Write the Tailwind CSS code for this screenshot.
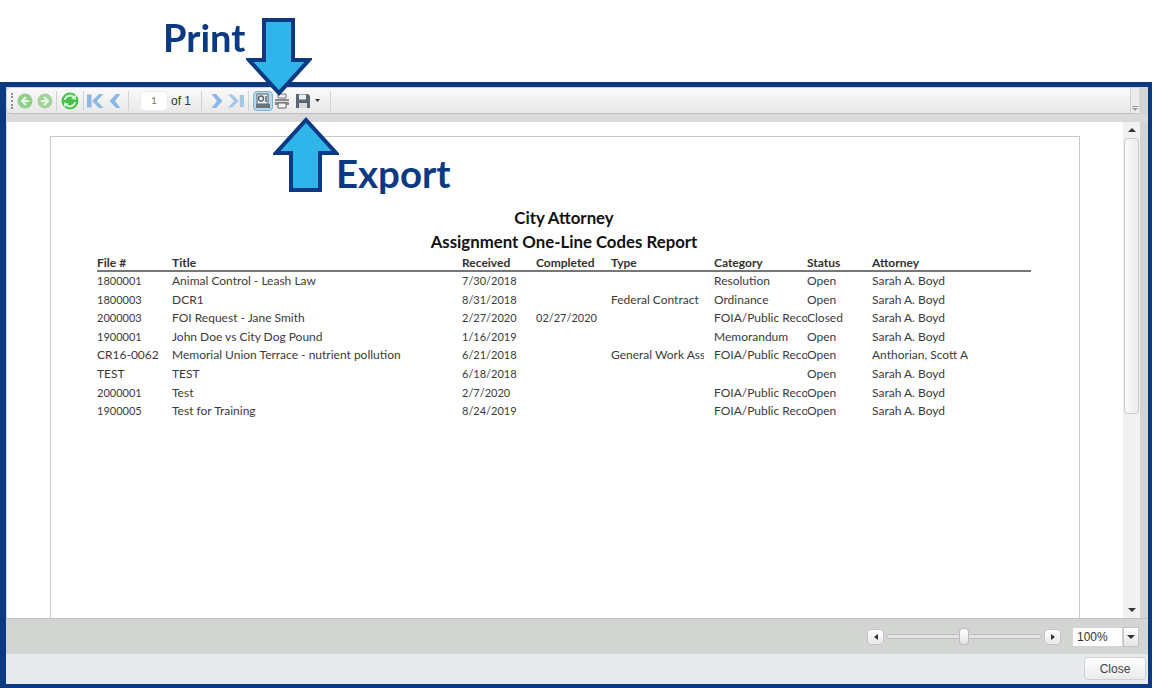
<!DOCTYPE html>
<html lang="en">
<head>
    <meta charset="UTF-8">
    <title>City Attorney Report</title>
    <script src="https://cdn.jsdelivr.net/npm/@tailwindcss/browser@4"></script>
</head>
<body class="bg-white font-['Lato','Liberation_Sans',sans-serif] overflow-hidden">
<div class="relative w-[1153px] h-[688px] overflow-hidden blur-[0.35px]">

    <!-- Callout space -->
    <div class="h-[82px]"></div>

    <!-- Report window -->
    <div class="h-[606px] w-[1152px] border-l-[6px] border-r-[4px] border-t-[5px] border-b-[4px] border-[#0b3a82] bg-[#d3d5d3] flex flex-col">

        <!-- Toolbar -->
        <div class="h-[26px] mt-[1px] ml-[1px] mr-[9px] bg-gradient-to-b from-[#fafafa] to-[#e8e8e8] border-b border-[#bdbdbd] rounded-sm flex items-center shrink-0">
            <div class="w-[3px] h-[16px] ml-[4px] mr-[2px] border-l-2 border-dotted border-[#8c8c8c]"></div>
            <!-- back / forward -->
            <svg class="w-[16px] h-[16px] ml-[1px]" viewBox="0 0 16 16"><circle cx="8" cy="8" r="7.5" fill="#8fd08c"/><path d="M9 4 5 8l4 4M5 8h7" fill="none" stroke="#e9f7e6" stroke-width="2"/></svg>
            <svg class="w-[16px] h-[16px] ml-[4px]" viewBox="0 0 16 16"><circle cx="8" cy="8" r="7.5" fill="#a4d39c"/><path d="m7 4 4 4-4 4m4-4H4" fill="none" stroke="#e9f7e6" stroke-width="2"/></svg>
            <div class="w-px h-[20px] bg-[#d2d2d2] ml-[3px] mr-[4px]"></div>
            <!-- refresh -->
            <svg class="w-[18px] h-[18px]" viewBox="0 0 16 16"><circle cx="8" cy="8" r="7.5" fill="#45c24a"/><path d="M3.500 7A4.600 4.600 0 0 1 12 5.500M12.500 9A4.600 4.600 0 0 1 4 10.500" fill="none" stroke="#d8f5d5" stroke-width="1.800"/><path d="m13.500 2.500-.5 4.500-4-1.500zM2.500 13.500l.5-4.500 4 1.500z" fill="#d8f5d5"/></svg>
            <div class="w-px h-[20px] bg-[#d2d2d2] ml-[4px] mr-[3px]"></div>
            <!-- first / prev -->
            <svg class="w-[17px] h-[16px]" viewBox="0 0 17 16"><path d="M0 1.500h4.500v13H0zM12 1h4.500L10 8l6.500 7H12L5 8z" fill="#8db8e2"/></svg>
            <svg class="w-[12px] h-[16px] ml-[5px]" viewBox="0 0 12 16"><path d="M7 1h4.500L6 8l5.500 7H7L.5 8z" fill="#8db8e2"/></svg>
            <div class="w-px h-[20px] bg-[#d2d2d2] ml-[7px] mr-[11px]"></div>
            <!-- page -->
            <div class="w-[28px] h-[20px] bg-white border border-[#ebebeb] text-[10px] text-[#777] flex items-center justify-center rounded-sm">1</div>
            <span class="w-[21px] text-[12px] whitespace-nowrap text-[#333] ml-[3px] font-['Liberation_Sans',sans-serif]">of 1</span>
            <div class="w-px h-[20px] bg-[#d2d2d2] ml-[9px] mr-[9px]"></div>
            <!-- next / last -->
            <svg class="w-[12px] h-[16px]" viewBox="0 0 12 16"><path d="M5 1H.5L6 8 .5 15H5l6.500-7z" fill="#8db8e2"/></svg>
            <svg class="w-[16px] h-[16px] ml-[5px]" viewBox="0 0 17 16"><path d="M12.500 1.500H17v13h-4.500zM4.500 1H0l6.500 7L0 15h4.500L11.500 8z" fill="#a7c6e6"/></svg>
            <div class="w-px h-[20px] bg-[#d2d2d2] ml-[4px] mr-[4px]"></div>
            <!-- print layout, toggled -->
            <div class="w-[20px] h-[20px] bg-[#b9d8ec] border border-[#7fb2d3] rounded-sm flex items-center justify-center">
                <svg class="w-[16px] h-[16px]" viewBox="0 0 16 16"><rect x="2" y="1" width="11" height="10" fill="#e7eef3" stroke="#59636b"/><circle cx="6" cy="5.500" r="2.500" fill="none" stroke="#59636b" stroke-width="1.300"/><path d="M11 3v6" stroke="#59636b" stroke-width="1.500"/><path d="M1 11h14v4H1z" fill="#6b747b"/></svg>
            </div>
            <!-- print -->
            <svg class="w-[16px] h-[16px] ml-[1px]" viewBox="0 0 16 16"><path d="M4 1h8v4H4z" fill="#f2f2f2" stroke="#777"/><path d="M1 6h14v6H1z" fill="#8a8a8a"/><path d="M1 8.500h14" stroke="#ddd"/><path d="M4 10h8v5H4z" fill="#f4f4f4" stroke="#666"/></svg>
            <!-- export -->
            <svg class="w-[16px] h-[16px] ml-[5px]" viewBox="0 0 16 16"><path d="M1 1h12l2 2v12H1z" fill="#5c6670"/><path d="M4 1.500h7v5H4z" fill="#e8edf1"/><path d="M4 10h8v5H4z" fill="#d9d9d9"/></svg>
            <svg class="w-[5px] h-[3px] ml-[4px]" viewBox="0 0 5 3"><path d="M0 0h5L2.500 3z" fill="#333"/></svg>
            <div class="w-px h-[20px] bg-[#d2d2d2] ml-[10px]"></div>
            <!-- overflow grip -->
            <div class="ml-auto w-[9px] h-full border-l border-[#d0d0d0] bg-[#ececec] flex flex-col justify-end items-center pb-[2px] gap-[1px]">
                <div class="w-[6px] h-px bg-[#9a9a9a]"></div>
                <div class="w-0 h-0 border-x-[3px] border-t-[3px] border-x-transparent border-t-[#9a9a9a]"></div>
            </div>
        </div>
        <div class="h-[8px] bg-[#d8d9d8] shrink-0"></div>

        <!-- Report viewer -->
        <div class="flex h-[496px] ml-[1px] shrink-0">
            <div class="flex-1 overflow-hidden pt-[14px] pl-[43px] bg-white">
                <div class="w-[1030px] h-[600px] border border-[#c8c8c8] pl-[46px]">
                    <div class="w-[934px] pt-[70px] text-[#3b3b3b]">
                        <h1 class="text-center text-[16.8px] leading-[22px] font-bold text-[#111]">City Attorney</h1>
                        <h2 class="text-center text-[16.8px] leading-[23px] mt-[1px] font-bold text-[#111]">Assignment One-Line Codes Report</h2>
                        <div class="grid grid-cols-[75px_290px_74px_75px_103px_93px_65px_159px] text-[12px] leading-[18.6px] whitespace-nowrap mt-[2px]">
                            <div class="col-span-8 grid grid-cols-subgrid font-bold text-[#333] border-b-2 border-[#777] h-[17px] leading-[16px]">
                                <div>File #</div><div>Title</div><div>Received</div><div>Completed</div><div>Type</div><div>Category</div><div>Status</div><div>Attorney</div>
                            </div>
                            <div class="col-span-8 grid grid-cols-subgrid">
                                <div class="text-[11px]">1800001</div><div>Animal Control - Leash Law</div><div class="text-[11px]">7/30/2018</div><div></div><div></div><div>Resolution</div><div>Open</div><div>Sarah A. Boyd</div>
                            </div>
                            <div class="col-span-8 grid grid-cols-subgrid">
                                <div class="text-[11px]">1800003</div><div>DCR1</div><div class="text-[11px]">8/31/2018</div><div></div><div>Federal Contract</div><div>Ordinance</div><div>Open</div><div>Sarah A. Boyd</div>
                            </div>
                            <div class="col-span-8 grid grid-cols-subgrid">
                                <div class="text-[11px]">2000003</div><div>FOI Request - Jane Smith</div><div class="text-[11px]">2/27/2020</div><div class="text-[11px]">02/27/2020</div><div></div><div class="overflow-hidden">FOIA/Public Records</div><div>Closed</div><div>Sarah A. Boyd</div>
                            </div>
                            <div class="col-span-8 grid grid-cols-subgrid">
                                <div class="text-[11px]">1900001</div><div>John Doe vs City Dog Pound</div><div class="text-[11px]">1/16/2019</div><div></div><div></div><div>Memorandum</div><div>Open</div><div>Sarah A. Boyd</div>
                            </div>
                            <div class="col-span-8 grid grid-cols-subgrid">
                                <div>CR16-0062</div><div>Memorial Union Terrace - nutrient pollution</div><div class="text-[11px]">6/21/2018</div><div></div><div class="w-[93px] overflow-hidden">General Work Assignment</div><div class="overflow-hidden">FOIA/Public Records</div><div>Open</div><div>Anthorian, Scott A</div>
                            </div>
                            <div class="col-span-8 grid grid-cols-subgrid">
                                <div>TEST</div><div>TEST</div><div class="text-[11px]">6/18/2018</div><div></div><div></div><div></div><div>Open</div><div>Sarah A. Boyd</div>
                            </div>
                            <div class="col-span-8 grid grid-cols-subgrid">
                                <div class="text-[11px]">2000001</div><div>Test</div><div class="text-[11px]">2/7/2020</div><div></div><div></div><div class="overflow-hidden">FOIA/Public Records</div><div>Open</div><div>Sarah A. Boyd</div>
                            </div>
                            <div class="col-span-8 grid grid-cols-subgrid">
                                <div class="text-[11px]">1900005</div><div>Test for Training</div><div class="text-[11px]">8/24/2019</div><div></div><div></div><div class="overflow-hidden">FOIA/Public Records</div><div>Open</div><div>Sarah A. Boyd</div>
                            </div>
                        </div>
                    </div>
                </div>
            </div>
            <!-- Vertical scrollbar -->
            <div class="w-[17px] bg-[#f1f1f1] flex flex-col items-center">
                <div class="h-[16px] flex items-center justify-center">
                    <div class="w-0 h-0 border-x-[4px] border-b-[4px] border-x-transparent border-b-[#333]"></div>
                </div>
                <div class="w-[15px] h-[276px] bg-gradient-to-r from-[#fafafa] to-[#ededed] border border-[#c9c9c9] rounded-sm"></div>
                <div class="mt-auto h-[16px] flex items-center justify-center">
                    <div class="w-0 h-0 border-x-[4px] border-t-[4px] border-x-transparent border-t-[#333]"></div>
                </div>
            </div>
            <div class="w-[8px] bg-[#d3d5d3]"></div>
        </div>

        <!-- Zoom bar -->
        <div class="h-[36px] bg-[#d3d5d3] border-t border-[#c2c2c2] flex items-center justify-end pr-[9px] shrink-0">
            <div class="w-[17px] h-[16px] bg-gradient-to-b from-white to-[#e8e8e8] border border-[#c4c4c4] rounded-sm flex items-center justify-center">
                <div class="w-0 h-0 border-y-[3px] border-r-[4px] border-y-transparent border-r-[#333]"></div>
            </div>
            <div class="relative w-[156px] h-[5px] mx-[2px] bg-[#e2e4e2] border border-[#bcbcbc] rounded-sm">
                <div class="absolute left-[72px] top-[-7px] w-[10px] h-[17px] bg-gradient-to-b from-white to-[#e4e4e4] border border-[#bbb] rounded-sm"></div>
            </div>
            <div class="w-[17px] h-[16px] bg-gradient-to-b from-white to-[#e8e8e8] border border-[#c4c4c4] rounded-sm flex items-center justify-center">
                <div class="w-0 h-0 border-y-[3px] border-l-[4px] border-y-transparent border-l-[#333]"></div>
            </div>
            <div class="w-[51px] h-[20px] ml-[11px] bg-white border border-[#d5d5d5] text-[12px] text-[#333] flex items-center pl-[4px] font-['Liberation_Sans',sans-serif]">100%</div>
            <div class="w-[16px] h-[20px] bg-gradient-to-b from-white to-[#e4e4e4] border border-[#c4c4c4] flex items-center justify-center">
                <div class="w-0 h-0 border-x-[4px] border-t-[4px] border-x-transparent border-t-[#333]"></div>
            </div>
        </div>

        <!-- Footer -->
        <div class="flex-1 bg-[#e7eaec] flex items-start justify-end pr-[2px] pt-[3px]">
            <button class="w-[62px] h-[23px] bg-gradient-to-b from-white to-[#ebebeb] border border-[#d0d0d0] rounded-sm text-[12px] text-[#444] font-['Liberation_Sans',sans-serif]">Close</button>
        </div>
    </div>

    <!-- Callouts over the window -->
    <span class="absolute left-[163px] top-[15px] text-[38px] leading-[44px] font-bold text-[#0b3a82]">Print</span>
    <svg class="absolute left-[246px] top-[17px]" width="66" height="82" viewBox="0 0 66 82"><path d="M18 3h29v40h16L33 76 3 43h15z" fill="#2fb5ea" stroke="#0b3a82" stroke-width="4"/></svg>
    <svg class="absolute left-[273px] top-[116px]" width="66" height="78" viewBox="0 0 66 78"><path d="M18 74h29V37h16L33 4 3 37h15z" fill="#2fb5ea" stroke="#0b3a82" stroke-width="4"/></svg>
    <span class="absolute left-[336px] top-[151px] text-[38.4px] leading-[44px] font-bold text-[#0b3a82]">Export</span>
</div>
</body>
</html>
